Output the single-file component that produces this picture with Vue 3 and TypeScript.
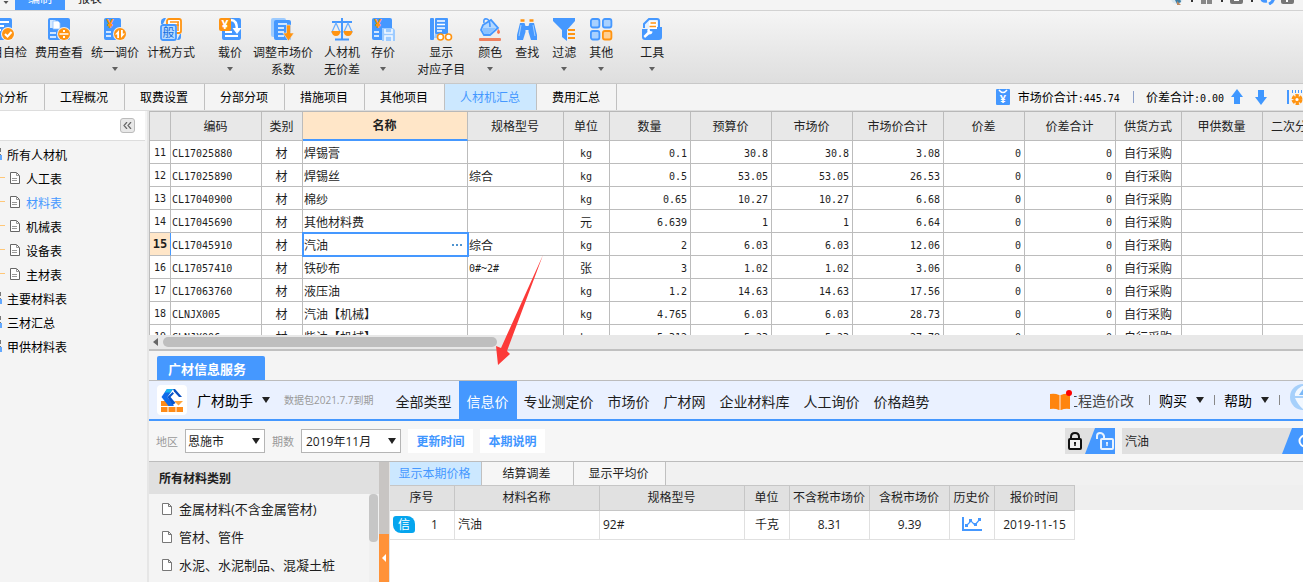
<script setup lang="ts">
import { ref } from 'vue'

interface Tool { lines: string[]; icon: string; menu?: boolean }

const yen = (x: number, y: number, size: number, fill: string): string =>
  `<text x="${x}" y="${y}" font-size="${size}" font-weight="700" fill="${fill}" text-anchor="middle">¥</text>`

const icons: Record<string, string> = {
  check: '<rect x="0" y="1" width="21" height="22" rx="2" fill="#4598ff"/><path d="M4 5h14M4 9h9M4 13h6" stroke="#fff" stroke-width="2"/><circle cx="17" cy="17" r="7" fill="#f4f4f4"/><circle cx="17" cy="17" r="6" fill="#ff9412"/><path d="M14 17l2.5 2.5 4-4.500" stroke="#fff" stroke-width="2" fill="none"/>',
  view: '<rect x="1" y="1" width="22" height="22" rx="2" fill="#4598ff"/><path d="M3 3h5l2 2v6H3z" fill="#d5e9ff"/><path d="M6 4h5l2 2v6H6z" fill="#fff" stroke="#8dc0ff" stroke-width=".8"/><path d="M3 16h6M3 20h6" stroke="#fff" stroke-width="1.500"/><circle cx="17" cy="17" r="7" fill="#eee"/><circle cx="17" cy="17" r="6" fill="#ff9412"/><path d="M12.500 17h9" stroke="#fff" stroke-width="1.500"/><path d="M16 13h2v2h-2zM16 19h2v2h-2z" fill="#fff"/>',
  adjust: '<rect x="1" y="1" width="17" height="22" rx="2" fill="#4598ff"/>' + yen(7, 11, 13, '#ff9412') + '<path d="M3 15h5M3 19h5" stroke="#fff" stroke-width="1.500"/><circle cx="17" cy="17" r="7" fill="#eee"/><circle cx="17" cy="17" r="6" fill="#ff9412"/><path d="M16 13v8h-1.800v-3.500H12zM18 13v8l4-4.500h-2.200V13z" fill="#fff"/>',
  tax: '<path d="M2 7V4q0-2 3-3h2l-3 6zM22 17v3q0 3-3 3h-1l3-6z" fill="#4598ff"/><rect x="8" y="2" width="14" height="14" rx="2" fill="#fff" stroke="#ff9412" stroke-width="1.800"/><path d="M11 5h9M11 8h9M19 5v9" stroke="#ff9412" stroke-width="1.500"/><rect x="2" y="8" width="15" height="15" rx="2" fill="#b8daff" stroke="#4598ff" stroke-width="1.800"/><text x="9.500" y="20" font-size="12" fill="#146fe0" text-anchor="middle">般</text>',
  load: '<rect x="4" y="1" width="19" height="22" rx="2" fill="#4598ff"/><path d="M7 15h7M7 19h13" stroke="#fff" stroke-width="2"/><path d="M13 3q6 0 6 10" stroke="#fff" stroke-width="2.500" fill="none"/><path d="M14.500 11h9L19 17z" fill="#fff"/><rect x="1" y="1" width="12" height="13" rx="2" fill="#ff9412"/>' + yen(7, 12, 12, '#fff'),
  factor: '<rect x="0" y="1" width="15" height="19" rx="2" fill="#9dcbff"/><rect x="3" y="3" width="17" height="20" rx="2" fill="#4598ff"/><path d="M7 7h9M7 11h6M7 15h6M7 19h6" stroke="#fff" stroke-width="1.600"/><path d="M15.500 8h4v8h3.500L17.500 24 12 16h3.500z" fill="#ff9412" stroke="#eee" stroke-width=".6"/>',
  scale: '<path d="M12 1v22M2 5h20M5 22.500h14" stroke="#4598ff" stroke-width="2"/><path d="M6 6L2 15h8zM18 6l-4 9h8z" fill="none" stroke="#6aaeff" stroke-width="1.200"/><path d="M1.500 14h9q-.5 5-4.500 5t-4.500-5zM13.500 14h9q-.5 5-4.500 5t-4.500-5z" fill="#ff9412"/>',
  save: '<rect x="1" y="1" width="20" height="22" rx="2" fill="#4598ff"/>' + yen(7, 11, 13, '#ff9412') + '<path d="M3 15h5M3 19h5" stroke="#fff" stroke-width="1.500"/><path d="M11 11h11l2 2v11H11z" fill="#9dcbff"/><path d="M14 12v4h7v-4M14 24v-5h7v5" stroke="#f4f9ff" stroke-width="1.600" fill="none"/>',
  show: '<rect x="1" y="1" width="4" height="22" rx="1" fill="#4598ff"/><rect x="6" y="1" width="13" height="16" rx="1" fill="#4598ff"/><path d="M6 17h8v4H5" fill="#9dcbff"/><path d="M8 4h8M8 7.500h8M8 11h8M8 14h5" stroke="#fff" stroke-width="1.500"/><circle cx="11.500" cy="20" r="3" fill="#fff" stroke="#ff9412" stroke-width="1.600"/><circle cx="19.500" cy="20" r="3" fill="#fff" stroke="#ff9412" stroke-width="1.600"/>',
  color: '<path d="M5 8l8-5 7 8-8 7H6l-3-5z" fill="#b4d8ff" stroke="#4598ff" stroke-width="1.800"/><path d="M4 11h14l-7 6H6z" fill="#8cc2ff"/><path d="M6 6q-1-5 3-4 3 1 3 8" stroke="#4598ff" stroke-width="1.600" fill="none"/><path d="M20.500 12q3 4 0 5-3-1 0-5z" fill="#f9764f"/><rect x="1" y="21" width="22" height="3" rx="1" fill="#f0815f"/>',
  find: '<path d="M5 6h4.500l1 3v6L8 23H2v-5zM14.500 6H19l3 12v5h-6l-2.500-8V9z" fill="#4598ff"/><path d="M10 9h4v4h-4z" fill="#4598ff"/><path d="M5.500 3.500h4M14.500 3.500h4" stroke="#ff9412" stroke-width="2.500"/><path d="M6 8L4 19M18 8l2 11" stroke="#a4d0ff" stroke-width="1"/>',
  filter: '<path d="M1 1h22v3l-8 9v11l-5-4v-7L1 4z" fill="#4598ff"/><path d="M16 13h7M16 17h7M16 21h7" stroke="#ff9412" stroke-width="1.800"/>',
  more: '<rect x="1.900" y="2" width="8.500" height="8.500" rx="2" fill="#a8d1ff" stroke="#4598ff" stroke-width="1.800"/><rect x="13.900" y="2" width="8.500" height="8.500" rx="2" fill="#a8d1ff" stroke="#4598ff" stroke-width="1.800"/><rect x="1.900" y="14" width="8.500" height="8.500" rx="2" fill="#a8d1ff" stroke="#4598ff" stroke-width="1.800"/><rect x="13.900" y="14" width="8.500" height="8.500" rx="2" fill="#ffd094" stroke="#ff9412" stroke-width="1.800"/>',
  tools: '<path d="M4 11V7l5-5h8q2 0 2 2v7" fill="#e4f1ff" stroke="#4598ff" stroke-width="2"/><path d="M2 12h8l2-2h10v10q0 3-3 3H5q-3 0-3-3z" fill="#4598ff"/><path d="M9 4.500h8V12H9z" fill="#fff"/><path d="M10.500 6h5.500M9.500 9.500H16" stroke="#ff9412" stroke-width="1.600"/><path d="M3.500 19l4-4q-1-3 2-4l.5 3 2.500.500q0 3-3.500 3l-4 3.500z" fill="#fff"/>',
}

const toolGroups: Tool[][] = [
  [
    { lines: ['项目自检'], icon: 'check' },
    { lines: ['费用查看'], icon: 'view' },
    { lines: ['统一调价'], icon: 'adjust', menu: true },
    { lines: ['计税方式'], icon: 'tax' },
  ],
  [
    { lines: ['载价'], icon: 'load', menu: true },
    { lines: ['调整市场价', '系数'], icon: 'factor' },
    { lines: ['人材机', '无价差'], icon: 'scale' },
    { lines: ['存价'], icon: 'save', menu: true },
  ],
  [
    { lines: ['显示', '对应子目'], icon: 'show' },
    { lines: ['颜色'], icon: 'color', menu: true },
    { lines: ['查找'], icon: 'find' },
    { lines: ['过滤'], icon: 'filter', menu: true },
    { lines: ['其他'], icon: 'more', menu: true },
  ],
  [{ lines: ['工具'], icon: 'tools', menu: true }],
]

const pages = ['造价分析', '工程概况', '取费设置', '分部分项', '措施项目', '其他项目', '人材机汇总', '费用汇总']
const page = ref('人材机汇总')

const tree = [
  { name: '所有人材机', child: false },
  { name: '人工表', child: true },
  { name: '材料表', child: true },
  { name: '机械表', child: true },
  { name: '设备表', child: true },
  { name: '主材表', child: true },
  { name: '主要材料表', child: false },
  { name: '三材汇总', child: false },
  { name: '甲供材料表', child: false },
]
const treeNode = ref('材料表')

const columns = ['', '编码', '类别', '名称', '规格型号', '单位', '数量', '预算价', '市场价', '市场价合计', '价差', '价差合计', '供货方式', '甲供数量', '二次分析']

interface Material { no: number; code: string; name: string; spec: string; unit: string; qty: string; budget: string; market: string; total: string }
const row = (no: number, code: string, name: string, spec: string, unit: string, qty: string, budget: string, total: string): Material =>
  ({ no, code, name, spec, unit, qty, budget, market: budget, total })

const materials: Material[] = [
  row(11, 'CL17025880', '焊锡膏', '', 'kg', '0.1', '30.8', '3.08'),
  row(12, 'CL17025890', '焊锡丝', '综合', 'kg', '0.5', '53.05', '26.53'),
  row(13, 'CL17040900', '棉纱', '', 'kg', '0.65', '10.27', '6.68'),
  row(14, 'CL17045690', '其他材料费', '', '元', '6.639', '1', '6.64'),
  row(15, 'CL17045910', '汽油', '综合', 'kg', '2', '6.03', '12.06'),
  row(16, 'CL17057410', '铁砂布', '0#~2#', '张', '3', '1.02', '3.06'),
  row(17, 'CL17063760', '液压油', '', 'kg', '1.2', '14.63', '17.56'),
  row(18, 'CLNJX005', '汽油【机械】', '', 'kg', '4.765', '6.03', '28.73'),
  row(19, 'CLNJX006', '柴油【机械】', '', 'kg', '5.312', '5.23', '27.78'),
]
const selected = ref(15)

const sources = ['全部类型', '信息价', '专业测定价', '市场价', '广材网', '企业材料库', '人工询价', '价格趋势']
const source = ref('信息价')
const categories = ['金属材料(不含金属管材)', '管材、管件', '水泥、水泥制品、混凝土桩']
const priceTabs = ['显示本期价格', '结算调差', '显示平均价']
const priceTab = ref('显示本期价格')
const priceColumns = ['序号', '材料名称', '规格型号', '单位', '不含税市场价', '含税市场价', '历史价', '报价时间']
const region = ref('恩施市')
const period = ref('2019年11月')
const keyword = ref('汽油')
</script>

<template>
  <div class="app">
    <header class="menubar">
      <svg class="menu-caret" width="8" height="9" viewBox="0 0 8 9"><path d="M0 0h5L2.500 3z" fill="#555" /></svg>
      <button class="menu active">编制</button>
      <button class="menu">报表</button>
      <svg class="menu-icons" width="132" height="16" viewBox="0 0 132 16">
        <circle cx="6" cy="9" r="6" fill="#dce8ee" />
        <path d="M3 9h6l1 4-4 2z" fill="#3e7ea5" /><path d="M6 12l4 4H6z" fill="#bd8960" />
        <path d="M20 11h2v2h-2zM50 11h2v2h-2zM80 11h2v2h-2z" fill="#333" />
        <path d="M30 4h5v5h-5zM36 4h5v5h-5zM30 10h5v5h-5zM36 10h5v5h-5z" fill="#888" />
        <rect x="59" y="2" width="13" height="13" rx="2" fill="#777" /><path d="M63 8h5v4h-5z" fill="#fff" />
        <path d="M91 8q-1 5 5 4M98 15q6-3 4-8" stroke="#4598ff" stroke-width="3" fill="none" />
        <rect x="110" y="1" width="13" height="14" rx="2" fill="#777" /><path d="M116 4v5M116 11v2" stroke="#fff" stroke-width="2" />
      </svg>
    </header>

    <div class="ribbon">
      <div v-for="(group, g) in toolGroups" :key="g" class="tool-group">
        <button v-for="tool in group" :key="tool.icon" class="tool">
          <svg class="tool-icon" width="24" height="24" viewBox="0 0 24 24" v-html="icons[tool.icon]"></svg>
          <span v-for="line in tool.lines" :key="line" class="tool-line">{{ line }}</span>
          <svg v-if="tool.menu" class="tool-caret" width="6" height="4" viewBox="0 0 6 4"><path d="M0 0h6L3 4z" fill="#606060" /></svg>
        </button>
      </div>
    </div>

    <div class="pagebar">
      <nav class="pages">
        <button v-for="p in pages" :key="p" class="page" :class="{ active: p === page }" @click="page = p">{{ p }}</button>
      </nav>
      <div class="totals">
        <svg width="14" height="16" viewBox="0 0 14 16">
          <rect width="14" height="16" rx="1" fill="#4598ff" />
          <path d="M3 1q4 5 8 0" fill="none" stroke="#fff" stroke-width="1.500" />
          <text x="7" y="14" font-size="11" font-weight="700" fill="#fff" text-anchor="middle">¥</text>
        </svg>
        <span class="total">市场价合计<span class="mono">:445.74</span></span>
        <span class="total-rule"></span>
        <span class="total">价差合计<span class="mono">:0.00</span></span>
        <button class="plain up" aria-label="上移"><svg width="12" height="16" viewBox="0 0 12 16"><path d="M6 0l6 8H9v7H3V8H0z" fill="#3f97ff" /></svg></button>
        <button class="plain down" aria-label="下移"><svg width="12" height="16" viewBox="0 0 12 16"><path d="M6 16l6-8H9V1H3v7H0z" fill="#3f97ff" /></svg></button>
        <button class="plain" aria-label="设置">
          <svg width="16" height="16" viewBox="0 0 16 16">
            <path d="M1 1v14" stroke="#4598ff" stroke-width="2" /><path d="M5.500 1v3M8.500 1v3M11.500 1v3M14.500 1v3" stroke="#4598ff" stroke-width="1" />
            <circle cx="10" cy="10.500" r="3.500" fill="#fff" stroke="#ff9412" stroke-width="4" stroke-dasharray="2.800 .9" /><circle cx="10" cy="10.500" r="2.600" fill="#fff" stroke="#ff9412" stroke-width="2" />
          </svg>
        </button>
      </div>
    </div>

    <div class="main">
      <aside class="sidebar">
        <div class="sidebar-head">
          <button class="collapse" aria-label="收起"><svg width="9" height="7" viewBox="0 0 9 7"><path d="M4 0L1 3.500 4 7M8 0L5 3.500 8 7" stroke="#666" stroke-width="1.200" fill="none" /></svg></button>
        </div>
        <ul class="tree">
          <li v-for="node in tree" :key="node.name">
            <a href="#" class="node" :class="{ child: node.child, active: node.name === treeNode }" @click.prevent="treeNode = node.name">
              <svg v-if="node.child" width="20" height="14" viewBox="0 0 20 14">
                <path d="M0 6.500h5" stroke="#ffc778" /><path d="M10.500 1.500h6l3 3v8h-9z" fill="#fff" stroke="#666" /><path d="M16.500 1.500v3h3M12 7.500h5M12 9.500h5" stroke="#999" fill="none" />
              </svg>
              <svg v-else width="2" height="16" viewBox="0 0 2 16"><path d="M0 1h1v4H0zM0 7h1v2H0z" fill="#777" /><path d="M0 8h2v5H0z" fill="#62a8ff" /></svg>
              <span>{{ node.name }}</span>
            </a>
          </li>
        </ul>
      </aside>

      <section class="workspace">
        <div class="grid-view">
          <table class="grid">
            <colgroup>
              <col class="w-no"><col class="w-code"><col class="w-kind"><col class="w-name"><col class="w-spec"><col class="w-unit">
              <col class="w-num"><col class="w-num"><col class="w-num"><col class="w-sum"><col class="w-num"><col class="w-sum">
              <col class="w-supply"><col class="w-num"><col class="w-supply">
            </colgroup>
            <thead>
              <tr><th v-for="c in columns" :key="c" :class="{ current: c === '名称' }">{{ c }}</th></tr>
            </thead>
            <tbody>
              <tr v-for="m in materials" :key="m.no" :class="{ selected: m.no === selected }" @click="selected = m.no">
                <td class="no mono">{{ m.no }}</td>
                <td class="mono">{{ m.code }}</td>
                <td class="center">材</td>
                <td class="name"><div class="name-cell"><span>{{ m.name }}</span><span v-if="m.no === selected" class="dots"><i></i><i></i><i></i></span></div></td>
                <td :class="{ mono: m.spec.startsWith('0') }">{{ m.spec }}</td>
                <td class="center" :class="{ mono: m.unit === 'kg' }">{{ m.unit }}</td>
                <td class="mono num">{{ m.qty }}</td>
                <td class="mono num">{{ m.budget }}</td>
                <td class="mono num">{{ m.market }}</td>
                <td class="mono num">{{ m.total }}</td>
                <td class="mono num">0</td>
                <td class="mono num">0</td>
                <td class="center">自行采购</td>
                <td></td>
                <td></td>
              </tr>
            </tbody>
          </table>
        </div>
        <div class="hscroll">
          <svg width="5" height="8" viewBox="0 0 5 8"><path d="M5 0v8L0 4z" fill="#666" /></svg>
          <div class="hthumb"></div>
        </div>

        <div class="service-tabs"><button class="service-tab">广材信息服务</button></div>

        <div class="helper">
          <svg class="logo" width="30" height="30" viewBox="0 0 30 30">
            <rect width="30" height="30" rx="4" fill="#fff" />
            <path d="M4 16h6l4 5h12v6H4z" fill="#ff8b17" />
            <path d="M17 16h9l-4.500 4.500z" fill="#ffa53d" />
            <path d="M4 21.500h23M11 22v5M19 22v5" stroke="#fff" stroke-width="1" />
            <path d="M10 4h6l-5.500 8 6.500 9h-5.500L4.500 12z" fill="#0f6bea" />
            <path d="M10 4h6l-2.500 3.500H7.600z" fill="#16b4f0" />
            <path d="M16 4h2l7 8h-3l-5-5.500z" fill="#0a4fc0" />
            <path d="M10.500 12l5-5 1.500 1.500L13.500 12l5 6-3 2z" fill="#0754cc" />
          </svg>
          <button class="plain brand">广材助手<svg class="caret" width="8" height="6" viewBox="0 0 8 6"><path d="M0 0h8L4 6z" fill="#222" /></svg></button>
          <span class="expiry">数据包2021.7.7到期</span>
          <nav class="sources">
            <button v-for="s in sources" :key="s" class="source" :class="{ active: s === source }" @click="source = s">{{ s }}</button>
          </nav>
          <div class="helper-side">
            <svg width="24" height="22" viewBox="0 0 24 22">
              <path d="M0 5q5-1 9 1v15q-4-2-9-1zM11 6q4-2 9-1v15q-5-1-9 1z" fill="#ff850d" /><path d="M9 6h2v15H9z" fill="#ffb979" /><circle cx="19" cy="4" r="3" fill="#f00" />
            </svg>
            <a href="#" class="news"><span>工程造价改</span></a>
            <span class="bar"></span>
            <button class="plain side-menu">购买<svg class="caret" width="8" height="6" viewBox="0 0 8 6"><path d="M0 0h8L4 6z" fill="#222" /></svg></button>
            <span class="bar"></span>
            <button class="plain side-menu">帮助<svg class="caret" width="8" height="6" viewBox="0 0 8 6"><path d="M0 0h8L4 6z" fill="#222" /></svg></button>
            <span class="bar"></span>
            <svg class="globe" width="14" height="28" viewBox="0 0 14 28">
              <circle cx="14" cy="14" r="13" fill="#a6d0fb" /><path d="M13 3q-8 5-7 10h8V3zM6 15h8v11q-5-4-8-11z" fill="#f2f8ff" /><path d="M14 6l-4 6h4z" fill="#7ab8f7" />
            </svg>
          </div>
        </div>

        <div class="filters">
          <label class="hint" for="region">地区</label>
          <div class="picker">
            <select id="region" v-model="region"><option>恩施市</option></select>
            <svg width="8" height="6" viewBox="0 0 8 6"><path d="M0 0h8L4 6z" fill="#222" /></svg>
          </div>
          <label class="hint" for="period">期数</label>
          <div class="picker wide">
            <select id="period" v-model="period"><option>2019年11月</option></select>
            <svg width="8" height="6" viewBox="0 0 8 6"><path d="M0 0h8L4 6z" fill="#222" /></svg>
          </div>
          <button class="action">更新时间</button>
          <button class="action">本期说明</button>
          <button class="plain lock" aria-label="锁定">
            <svg width="50" height="26" viewBox="0 0 50 26">
              <rect width="50" height="26" fill="#e0e0e0" /><path d="M30 0h20v26H20z" fill="#4598ff" />
              <path d="M6 11V9q0-4 4-4t4 4v2" stroke="#111" stroke-width="2" fill="none" /><rect x="4" y="11" width="12" height="10" rx="1" fill="#f3f3f3" stroke="#111" stroke-width="2" /><path d="M10 14v4M9 15h2" stroke="#111" stroke-width="1.500" />
              <path d="M32 11V8q0-3 3-3t4 3v3" stroke="#e8f3ff" stroke-width="2" fill="none" /><rect x="36" y="11" width="12" height="10" rx="1" fill="none" stroke="#e8f3ff" stroke-width="2" /><path d="M42 14v4M41 15h2" stroke="#e8f3ff" stroke-width="1.500" />
            </svg>
          </button>
          <div class="search">
            <input v-model="keyword" aria-label="搜索材料">
            <button class="plain" aria-label="搜索"><svg width="21" height="26" viewBox="0 0 21 26"><path d="M10 0h11v26H0z" fill="#4598ff" /><circle cx="23" cy="13" r="5.500" fill="none" stroke="#fff" stroke-width="2" /></svg></button>
          </div>
        </div>

        <div class="lookup">
          <div class="categories">
            <h3>所有材料类别</h3>
            <div class="category-body">
              <ul>
                <li v-for="c in categories" :key="c">
                  <a href="#" @click.prevent><svg width="10" height="12" viewBox="0 0 10 12"><path d="M.5.5h6l3 3v8h-9zM6.500.5v3h3" fill="#fff" stroke="#777" /></svg>{{ c }}</a>
                </li>
              </ul>
              <div class="vscroll"><div class="vthumb"></div></div>
            </div>
          </div>
          <div class="splitter">
            <button aria-label="收起类别"><svg width="4" height="8" viewBox="0 0 4 8"><path d="M4 0v8L0 4z" fill="#fff" /></svg></button>
          </div>
          <div class="prices">
            <div class="price-tabs">
              <button v-for="t in priceTabs" :key="t" :class="{ active: t === priceTab }" @click="priceTab = t">{{ t }}</button>
            </div>
            <div class="price-view">
              <table class="price-table">
                <colgroup>
                  <col class="p-no"><col class="p-text"><col class="p-text"><col class="p-small"><col class="p-price"><col class="p-price"><col class="p-small"><col class="p-price">
                </colgroup>
                <thead><tr><th v-for="c in priceColumns" :key="c">{{ c }}</th></tr></thead>
                <tbody>
                  <tr>
                    <td><div class="serial"><span class="badge">信</span><span class="serial-no">1</span></div></td>
                    <td class="left">汽油</td>
                    <td class="left">92#</td>
                    <td>千克</td>
                    <td>8.31</td>
                    <td>9.39</td>
                    <td>
                      <svg class="trend" width="20" height="14" viewBox="0 0 20 14"><path d="M1 0v13h19" stroke="#4598ff" stroke-width="2" fill="none" /><path d="M4 9l5-5 4 4 5-6" stroke="#4598ff" stroke-width="1.200" fill="none" /><path d="M3 7h3v3H3zM7 2h3v3H7zM12 6h3v3h-3zM16 1h3v3h-3z" fill="#4598ff" /></svg>
                    </td>
                    <td>2019-11-15</td>
                  </tr>
                </tbody>
              </table>
            </div>
          </div>
        </div>
      </section>
    </div>

    <svg class="pointer" width="48" height="111" viewBox="0 0 48 111"><path d="M47 0L11 96l3 3L2 110 0 91l5 2z" fill="#fc3a38" /></svg>
  </div>
</template>

<style>
html, body { margin: 0; overflow: hidden; }
</style>

<style scoped>
* { box-sizing: border-box; }
.app {
  position: relative; height: 100vh; overflow: hidden; display: flex; flex-direction: column;
  background: #f4f4f4; color: #1e1e1e; font: 12px/17px "Open Sans", "Noto Sans CJK SC", sans-serif;
}
svg { flex: none; display: block; }
button, input, select { font: inherit; color: inherit; }
button { border: 0; padding: 0; background: none; white-space: nowrap; flex: none; }
a { color: inherit; text-decoration: none; }
ul { list-style: none; margin: 0; padding: 0; }
.plain { display: flex; align-items: center; }
.mono { font-family: "DejaVu Sans Mono", "Noto Sans CJK SC", monospace; font-size: 10px; }

.menubar { display: flex; align-items: flex-end; height: 11px; overflow: hidden; border-bottom: 1px solid #d2d2d2; flex: none; }
.menu-caret { width: 15px; }
.menu { width: 50px; height: 24px; font-size: 12px; }
.menu.active { background: #4598ff; color: #fff; }
.menu-icons { margin-left: auto; margin-bottom: 5px; }

.ribbon { display: flex; flex: none; height: 73px; margin-left: -21px; background: linear-gradient(#f5f5f5, #dedede); border-bottom: 1px solid #c8c8c8; }
.tool-group { display: flex; gap: 8px; margin-right: 23px; flex: none; }
.tool-group:nth-child(2) { gap: 11px; margin-right: 22px; }
.tool-group:nth-child(3) { gap: 13px; margin-right: 27px; }
.tool { display: flex; flex-direction: column; align-items: center; padding-top: 6px; }
.tool-icon { margin-bottom: 3px; }
.tool-line { line-height: 17px; }
.tool-caret { margin-top: 6px; }

.pagebar { display: flex; flex: none; height: 27px; border-bottom: 1px solid #ddd; }
.pages { display: flex; margin-left: -35px; }
.page { min-width: 80px; padding: 1px 16px 0 15px; border-right: 1px solid #c0c0c0; color: #000; }
.page.active { background: #cce8ff; color: #4598ff; }
.totals { display: flex; align-items: center; margin-left: auto; color: #000; }
.total { margin-left: 8px; padding-top: 1px; }
.total-rule { width: 1px; height: 12px; margin: 0 4px 0 13px; background: #8c9fc8; }
.up { margin-left: 7px; }
.down { margin: 0 20px 0 12px; }

.main { flex: 1; min-height: 0; display: flex; }
.sidebar { flex: none; width: 149px; border-right: 2px solid #e6e6e6; }
.sidebar-head { display: flex; justify-content: flex-end; align-items: center; height: 30px; margin-right: 2px; padding-right: 10px; background: #fff; border-bottom: 1px solid #ddd; }
.collapse { display: flex; align-items: center; justify-content: center; width: 15px; height: 15px; border: 1px solid #bbb; border-radius: 3px; background: #e8e8e8; }
.tree { padding-top: 2px; }
.node { display: flex; align-items: center; gap: 5px; height: 24px; color: #000; }
.node.child { gap: 6px; }
.node.child svg { margin-bottom: 3px; }
.node.active { color: #4598ff; }

.workspace { flex: 1; min-width: 0; display: flex; flex-direction: column; }
.grid-view { flex: none; height: 224px; overflow: hidden; background: #fff; }
.grid { width: 1180px; table-layout: fixed; border-collapse: separate; border-spacing: 0; border-top: 1px solid #b8b8b8; border-left: 1px solid #bcbcbc; }
.w-no { width: 21px; } .w-code, .w-sum { width: 91px; } .w-kind { width: 41px; } .w-name { width: 165px; }
.w-spec { width: 96px; } .w-unit { width: 46px; } .w-num { width: 81px; } .w-supply { width: 66px; }
.grid th, .grid td { padding: 0; border-right: 1px solid #bcbcbc; border-bottom: 1px solid #bcbcbc; white-space: nowrap; overflow: hidden; }
.grid th { height: 29px; padding-right: 1px; background: #e8e8e8; font-weight: 400; color: #222; }
.grid th.current { background: #ffe6c8; border-bottom: 2px solid #4598ff; font-weight: 700; }
.grid td { height: 23px; padding: 3px 1px 0; line-height: 17px; }
.grid .center { text-align: center; padding-right: 2px; }
.grid .no { text-align: center; padding-top: 1px; }
.grid .num { text-align: right; padding-right: 3px; }
.name-cell { display: flex; align-items: center; justify-content: space-between; }
.dots { display: flex; gap: 2px; padding: 0 4px 2px 0; }
.dots i { width: 2px; height: 2px; background: #4f94d0; }
.selected .no { background: #ffe6c8; font-weight: 700; font-size: 12px; border-right-color: #4598ff; }
.selected .name { outline: 2px solid #4598ff; outline-offset: -1px; }
.hscroll { display: flex; align-items: center; gap: 5px; flex: none; height: 16px; padding-left: 4px; background: #e8e8e8; border-bottom: 2px solid #c0c0c0; }
.hthumb { width: 29%; height: 10px; border-radius: 5px; background: #bebebe; }

.service-tabs { display: flex; align-items: flex-end; flex: none; height: 30px; padding-left: 8px; border-bottom: 1px solid #bcbcbc; }
.service-tab { height: 24px; padding: 2px 19px 0 11px; border-radius: 2px 2px 0 0; background: #4598ff; color: #fff; font-size: 13px; font-weight: 700; }
.helper { display: flex; align-items: center; flex: none; height: 40px; padding-left: 8px; background: #eaf1ff; border-bottom: 2px solid #4598ff; font-size: 14px; }
.brand { margin-left: 10px; color: #000; }
.caret { margin-left: 9px; }
.expiry { margin-left: 14px; font-size: 10px; color: #999; white-space: nowrap; }
.sources { display: flex; align-self: stretch; margin-left: 15px; }
.source { padding: 2px 7px 0; }
.source.active { padding: 2px 8px 0; background: #4598ff; color: #fff; }
.helper-side { display: flex; align-items: center; flex: none; margin-left: auto; }
.news { display: flex; justify-content: flex-end; width: 60px; overflow: hidden; color: #444; }
.news span { flex: none; }
.bar { width: 1px; height: 10px; margin-left: 10px; background: #888; }
.news + .bar { margin-left: 15px; }
.side-menu { margin-left: 9px; color: #000; }
.globe { margin-left: 9px; margin-bottom: 6px; }

.filters { display: flex; align-items: center; gap: 7px; flex: none; height: 41px; padding-left: 7px; background: #f6f6f6; border-bottom: 1px solid #bcbcbc; }
.hint { flex: none; font-size: 11px; color: #999; }
.picker { position: relative; flex: none; width: 80px; height: 24px; }
.picker.wide { width: 100px; }
.picker select { appearance: none; width: 100%; height: 100%; padding: 0 2px; border: 1px solid #b5b5b5; border-radius: 0; background: #fff; }
.picker.wide select { padding-left: 4px; }
.picker svg { position: absolute; right: 5px; top: 9px; pointer-events: none; }
.action { height: 24px; width: 65px; background: #fff; color: #3f96ff; font-weight: 700; }
.lock { margin-left: auto; }
.search { display: flex; flex: none; width: 181px; height: 26px; background: #e0e0e0; }
.search input { flex: 1; min-width: 0; padding: 0 3px; border: 0; background: none; outline: 0; }

.lookup { flex: 1; min-height: 0; display: flex; }
.categories { flex: none; width: 230px; display: flex; flex-direction: column; }
.categories h3 { margin: 0; height: 32px; padding-left: 10px; background: #e0e0e0; font-size: 12px; line-height: 33px; }
.category-body { flex: 1; min-height: 0; display: flex; overflow: hidden; }
.category-body ul { flex: 1; padding-top: 1px; }
.category-body a { display: flex; align-items: center; gap: 7px; height: 28px; padding-left: 13px; font-size: 13px; white-space: nowrap; }
.vscroll { width: 10px; padding-right: 1px; background: #f0f0f0; }
.vthumb { height: 48px; border-radius: 4px; background: #c6c6c6; }
.splitter { flex: none; display: flex; align-items: flex-end; width: 11px; background: #c8c5c3; border-right: 1px solid #e4e4e4; }
.splitter button { display: flex; align-items: center; justify-content: center; width: 10px; height: 48px; background: #ff9238; }
.prices { flex: 1; min-width: 0; display: flex; flex-direction: column; background: #fff; }
.price-tabs { display: flex; flex: none; height: 23px; background: #f1f1f1; }
.price-tabs button { width: 92px; padding-right: 2px; border-right: 1px solid #c0c0c0; background: #f6f6f6; }
.price-tabs button.active { background: #cce8ff; color: #4598ff; }
.price-view { overflow: hidden; background: linear-gradient(#efefef 25px, #fff 25px); }
.price-table { width: 685px; table-layout: fixed; border-collapse: separate; border-spacing: 0; }
.p-no { width: 65px; } .p-text { width: 145px; } .p-small { width: 45px; } .p-price { width: 80px; }
.price-table th { height: 26px; padding: 0 1px 2px 0; border: solid #c6c6c6; border-width: 1px 1px 1px 0; background: #e1e1e1; font-weight: 400; white-space: nowrap; }
.price-table td { height: 29px; padding: 0 0 2px; border: solid #e0e0e0; border-width: 0 1px 1px 0; text-align: center; }
.price-table .left { text-align: left; padding-left: 3px; }
.serial { display: flex; align-items: center; padding-left: 3px; }
.badge { width: 22px; height: 17px; border-radius: 3px 8px 3px 8px; background: #05a5ee; color: #fff; line-height: 17px; }
.serial-no { padding-left: 16px; }
.trend { margin: 0 auto; }

.pointer { position: absolute; left: 496px; top: 255px; pointer-events: none; }
</style>
